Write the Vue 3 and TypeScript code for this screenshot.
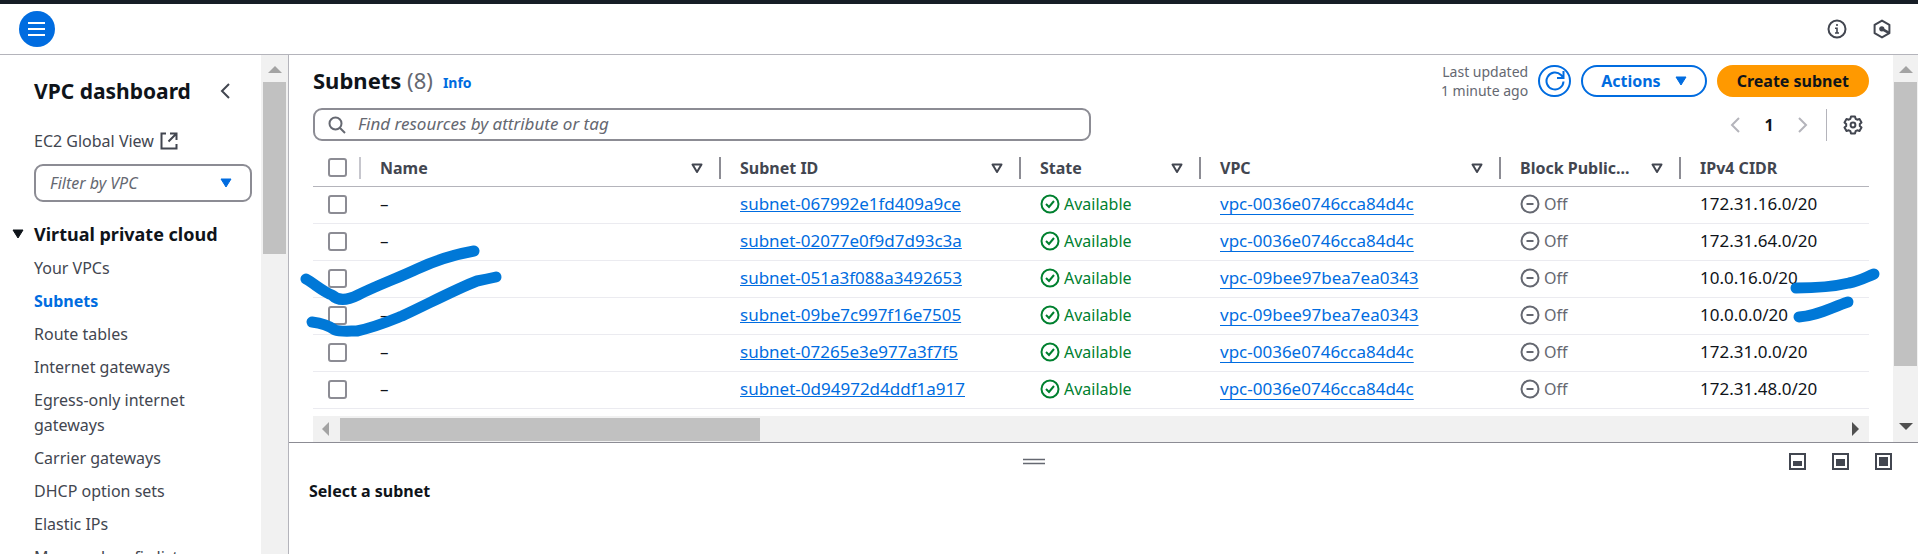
<script setup lang="ts">
import { ref } from 'vue'

interface Subnet {
  id: string
  vpc: string
  cidr: string
}

const defaultVpc = 'vpc-0036e0746cca84d4c'
const customVpc = 'vpc-09bee97bea7ea0343'

const subnets: Subnet[] = [
  { id: 'subnet-067992e1fd409a9ce', vpc: defaultVpc, cidr: '172.31.16.0/20' },
  { id: 'subnet-02077e0f9d7d93c3a', vpc: defaultVpc, cidr: '172.31.64.0/20' },
  { id: 'subnet-051a3f088a3492653', vpc: customVpc, cidr: '10.0.16.0/20' },
  { id: 'subnet-09be7c997f16e7505', vpc: customVpc, cidr: '10.0.0.0/20' },
  { id: 'subnet-07265e3e977a3f7f5', vpc: defaultVpc, cidr: '172.31.0.0/20' },
  { id: 'subnet-0d94972d4ddf1a917', vpc: defaultVpc, cidr: '172.31.48.0/20' },
]

const columns = [
  { key: 'name', label: 'Name', sortable: true },
  { key: 'id', label: 'Subnet ID', sortable: true },
  { key: 'state', label: 'State', sortable: true },
  { key: 'vpc', label: 'VPC', sortable: true },
  { key: 'block', label: 'Block Public...', sortable: true },
  { key: 'cidr', label: 'IPv4 CIDR', sortable: false },
]

const links = [
  'Your VPCs',
  'Subnets',
  'Route tables',
  'Internet gateways',
  'Egress-only internet gateways',
  'Carrier gateways',
  'DHCP option sets',
  'Elastic IPs',
  'Managed prefix lists',
]

const selected = ref<string[]>([])
const query = ref('')
</script>

<template>
  <div class="page">
    <header class="topbar">
      <button class="menu" aria-label="Open navigation">
        <svg width="18" height="16" viewBox="0 0 18 16"><path d="M0 2h17M0 8h17M0 14h17" stroke="#fff" stroke-width="2" /></svg>
      </button>
      <div class="tools">
        <button class="icon" aria-label="Info">
          <svg width="20" height="20" viewBox="0 0 20 20" fill="none" stroke="#424650" stroke-width="2"><circle cx="10" cy="10" r="8.5" /><path d="M10 5v2M8 9.3h2V14M8 14h4" stroke-width="1.6" /></svg>
        </button>
        <button class="icon" aria-label="Amazon Q">
          <svg width="20" height="20" viewBox="0 0 20 20" fill="none" stroke="#424650" stroke-width="2"><path d="M10 1.6l7.4 4.2v8.4L10 18.4l-7.4-4.2V5.800z" stroke-linejoin="round" /><circle cx="9.800" cy="9.800" r="2.600" fill="#424650" stroke="none" /><path d="M10 10l7 3.800" stroke-width="2.600" /></svg>
        </button>
      </div>
    </header>

    <div class="body">
      <aside class="sidebar">
        <nav class="nav">
          <div class="nav-head">
            <h2>VPC dashboard</h2>
            <button class="icon" aria-label="Close navigation">
              <svg width="10" height="16" viewBox="0 0 10 16" fill="none" stroke="#424650" stroke-width="2"><path d="M9 1L2 8l7 7" /></svg>
            </button>
          </div>
          <a class="global" href="#">EC2 Global View
            <svg width="18" height="18" viewBox="0 0 18 18" fill="none" stroke="#424650" stroke-width="2"><path d="M6 1.500H1.500v15h15V12M10 1.500h6.500V8M16 2L8.500 9.500" /></svg>
          </a>
          <div class="filter">
            <select aria-label="Filter by VPC"><option>Filter by VPC</option></select>
            <svg width="12" height="10" viewBox="0 0 12 10"><path d="M1 1h10L6 9z" fill="#006ce0" stroke="#006ce0" stroke-linejoin="round" /></svg>
          </div>
          <button class="section">
            <svg width="12" height="10" viewBox="0 0 12 10"><path d="M1 1h10L6 9z" fill="#0f141a" stroke="#0f141a" stroke-linejoin="round" /></svg>
            Virtual private cloud
          </button>
          <ul>
            <li v-for="link in links" :key="link">
              <a href="#" :class="{ active: link === 'Subnets' }">{{ link }}</a>
            </li>
          </ul>
        </nav>
        <div class="vbar nav-bar">
          <svg class="arrow" width="14" height="8" viewBox="0 0 14 8"><path d="M0 7L7 0l7 7z" fill="#a3a3a3" /></svg>
          <div class="thumb"></div>
        </div>
      </aside>

      <main class="main">
        <section class="listing">
          <div class="content">
            <div class="title-row">
              <h1>Subnets <span>(8)</span></h1>
              <a class="info" href="#">Info</a>
              <div class="actions">
                <p class="updated">Last updated<br />1 minute ago</p>
                <button class="round" aria-label="Refresh">
                  <svg width="20" height="20" viewBox="0 0 20 20" fill="none" stroke="#006ce0" stroke-width="2"><path d="M18.500 10.500A8.500 8.500 0 1 1 16 4l2 2.500M18.500 0v7H12" /></svg>
                </button>
                <button class="pill">Actions
                  <svg width="12" height="10" viewBox="0 0 12 10"><path d="M1 1h10L6 9z" fill="#006ce0" stroke="#006ce0" stroke-linejoin="round" /></svg>
                </button>
                <button class="pill primary">Create subnet</button>
              </div>
            </div>

            <div class="search-row">
              <label class="search">
                <svg width="18" height="18" viewBox="0 0 18 18" fill="none" stroke="#656871" stroke-width="2"><circle cx="7.500" cy="7.500" r="6" /><path d="M12 12l5 5" /></svg>
                <input v-model="query" type="text" aria-label="Find resources" placeholder="Find resources by attribute or tag" />
              </label>
              <div class="pager">
                <button class="icon" aria-label="Previous page">
                  <svg width="10" height="16" viewBox="0 0 10 16" fill="none" stroke="#b4b4bb" stroke-width="2"><path d="M9 1L2 8l7 7" /></svg>
                </button>
                <button class="icon current">1</button>
                <button class="icon" aria-label="Next page">
                  <svg width="10" height="16" viewBox="0 0 10 16" fill="none" stroke="#b4b4bb" stroke-width="2"><path d="M1 1l7 7-7 7" /></svg>
                </button>
                <span class="rule"></span>
                <button class="icon" aria-label="Preferences">
                  <svg width="20" height="20" viewBox="0 0 20 20" fill="none" stroke="#424650" stroke-width="2" stroke-linejoin="round"><path d="M8 1.500h4l.6 2.300 1.600.9 2.300-.7 2 3.400L16.800 9v2l1.700 1.600-2 3.400-2.300-.7-1.600.9-.6 2.300H8l-.6-2.300-1.600-.9-2.300.7-2-3.400L3.200 11V9L1.500 7.400l2-3.400 2.300.7 1.600-.9z" /><circle cx="10" cy="10" r="2.400" /></svg>
                </button>
              </div>
            </div>

            <table>
              <colgroup>
                <col class="c-check" /><col class="c-name" /><col class="c-wide" /><col class="c-slim" /><col class="c-wide" /><col class="c-slim" /><col />
              </colgroup>
              <thead>
                <tr>
                  <th class="check"><input type="checkbox" aria-label="Select all subnets" /></th>
                  <th v-for="col in columns" :key="col.key" scope="col">
                    <div class="th">
                      {{ col.label }}
                      <svg v-if="col.sortable" width="12" height="11" viewBox="0 0 12 11"><path d="M1.500 1.500h9L6 9z" fill="none" stroke="#424650" stroke-width="2" stroke-linejoin="round" /></svg>
                    </div>
                  </th>
                </tr>
              </thead>
              <tbody>
                <tr v-for="subnet in subnets" :key="subnet.id">
                  <td class="check"><input v-model="selected" type="checkbox" :value="subnet.id" :aria-label="subnet.id" /></td>
                  <td>–</td>
                  <td><a class="id" href="#">{{ subnet.id }}</a></td>
                  <td>
                    <span class="status ok">
                      <svg width="20" height="20" viewBox="0 0 20 20" fill="none" stroke="#00802f" stroke-width="2"><circle cx="10" cy="10" r="8.500" /><path d="M6 10l3 3 5-6" /></svg>Available
                    </span>
                  </td>
                  <td><a class="vpc" href="#">{{ subnet.vpc }}</a></td>
                  <td>
                    <span class="status off">
                      <svg width="20" height="20" viewBox="0 0 20 20" fill="none" stroke="#656871" stroke-width="2"><circle cx="10" cy="10" r="8.500" /><path d="M6.500 10h7" /></svg>Off
                    </span>
                  </td>
                  <td>{{ subnet.cidr }}</td>
                </tr>
              </tbody>
            </table>

            <div class="hbar">
              <svg class="left" width="8" height="14" viewBox="0 0 8 14"><path d="M7 0L0 7l7 7z" fill="#a3a3a3" /></svg>
              <div class="thumb"></div>
              <svg class="right" width="8" height="14" viewBox="0 0 8 14"><path d="M0 0l7 7-7 7z" fill="#505050" /></svg>
            </div>
          </div>

          <div class="vbar main-bar">
            <svg class="arrow" width="14" height="8" viewBox="0 0 14 8"><path d="M0 7L7 0l7 7z" fill="#a3a3a3" /></svg>
            <div class="thumb"></div>
            <svg class="arrow down" width="14" height="8" viewBox="0 0 14 8"><path d="M0 0l7 7 7-7z" fill="#505050" /></svg>
          </div>

          <svg class="ink" width="1600" height="300" viewBox="289 55 1600 300" fill="none" stroke="#0078d7" stroke-width="11" stroke-linecap="round" stroke-linejoin="round">
            <path d="M306 279C315 284 322 291 332 295C338 301 346 301 358 295C378 285 398 278 417 269C436 260 452 255 474 251" />
            <path d="M312 322C320 323 328 325 335 330C340 332 350 331 357 331C376 327 392 320 402 316C424 306 456 289 477 281Q487 279 496 277" />
            <path d="M1796 288C1815 288 1832 287 1849 283C1860 281 1866 277 1874 274" />
            <path d="M1799 317C1817 316 1830 308 1848 302" />
          </svg>
        </section>

        <section class="split">
          <div class="split-head">
            <button class="icon handle" aria-label="Resize panel">
              <svg width="22" height="8" viewBox="0 0 22 8"><path d="M0 1.500h22M0 5.500h22" stroke="#656871" stroke-width="1.500" /></svg>
            </button>
            <div class="sizes">
              <button class="icon" aria-label="Small panel">
                <svg width="17" height="17" viewBox="0 0 17 17"><path d="M1 1h15v15H1z" fill="none" stroke="#424650" stroke-width="2" /><path d="M4 8h9v5H4z" fill="#424650" /></svg>
              </button>
              <button class="icon" aria-label="Half panel">
                <svg width="17" height="17" viewBox="0 0 17 17"><path d="M1 1h15v15H1z" fill="none" stroke="#424650" stroke-width="2" /><path d="M4 6h9v7H4z" fill="#424650" /></svg>
              </button>
              <button class="icon" aria-label="Full panel">
                <svg width="17" height="17" viewBox="0 0 17 17"><path d="M1 1h15v15H1z" fill="none" stroke="#424650" stroke-width="2" /><path d="M4 4h9v9H4z" fill="#424650" /></svg>
              </button>
            </div>
          </div>
          <h3>Select a subnet</h3>
        </section>
      </main>
    </div>
  </div>
</template>

<style>
body {
  margin: 0;
  overflow: hidden;
}
</style>

<style scoped>
* {
  box-sizing: border-box;
}
.page {
  display: flex;
  flex-direction: column;
  height: 100vh;
  overflow: hidden;
  background: #fff;
  color: #0f141a;
  font: 16px/24px "Noto Sans", "Open Sans", sans-serif;
}
button,
input,
select {
  font: inherit;
  color: inherit;
}
button {
  padding: 0;
  border: 0;
  background: none;
}
svg {
  display: block;
  flex: none;
}
h1,
h2,
h3,
p,
ul {
  margin: 0;
  padding: 0;
}
a {
  text-decoration: none;
}
.icon {
  display: flex;
  align-items: center;
  justify-content: center;
}
.topbar {
  display: flex;
  flex: none;
  align-items: center;
  justify-content: space-between;
  height: 55px;
  padding: 0 26px 0 19px;
  border-top: 4px solid #161d26;
  border-bottom: 1px solid #b4b4bb;
}
.menu {
  display: flex;
  align-items: center;
  justify-content: center;
  width: 36px;
  height: 36px;
  border-radius: 50%;
  background: #006ce0;
}
.tools {
  display: flex;
  gap: 25px;
}
.body {
  display: flex;
  flex: 1;
  min-height: 0;
}
.sidebar {
  display: flex;
  flex: none;
  width: 289px;
  border-right: 1px solid #b4b4bb;
}
.nav {
  flex: 1;
  padding: 22px 9px 0 34px;
  overflow: hidden;
  color: #424650;
}
.nav-head {
  display: flex;
  align-items: center;
  justify-content: space-between;
  padding-right: 22px;
}
h2 {
  color: #0f141a;
  font-size: 21px;
  font-weight: 700;
  line-height: 28px;
}
.global {
  display: flex;
  align-items: center;
  gap: 6px;
  margin-top: 24px;
  color: #424650;
}
.filter {
  display: grid;
  align-items: center;
  margin-top: 11px;
}
.filter > * {
  grid-area: 1 / 1;
}
.filter svg {
  justify-self: end;
  margin-right: 20px;
  pointer-events: none;
}
.filter select {
  appearance: none;
  width: 100%;
  height: 38px;
  padding: 0 14px;
  border: 2px solid #8c8c94;
  border-radius: 9px;
  background: #fff;
  color: #656871;
  font-style: italic;
}
.section {
  display: flex;
  align-items: center;
  gap: 10px;
  margin: 20px 0 0 -22px;
  color: #0f141a;
  font-size: 18px;
  font-weight: 700;
  white-space: nowrap;
}
ul {
  display: flex;
  flex-direction: column;
  gap: 8px;
  margin-top: 10px;
  padding-right: 40px;
  line-height: 25px;
  list-style: none;
}
li a {
  display: block;
  color: #424650;
}
li .active {
  color: #006ce0;
  font-weight: 700;
}
.vbar {
  display: flex;
  flex: none;
  flex-direction: column;
  align-items: center;
  background: #f1f1f1;
}
.vbar .arrow {
  margin: 11px 0 8px;
}
.vbar .down {
  margin: auto 0 11px;
}
.vbar .thumb {
  width: 23px;
  background: #c1c1c1;
}
.nav-bar {
  width: 27px;
}
.nav-bar .thumb {
  height: 172px;
}
.main-bar {
  width: 25px;
}
.main-bar .thumb {
  height: 284px;
}
.main {
  display: flex;
  flex: 1;
  flex-direction: column;
  min-width: 0;
}
.listing {
  position: relative;
  display: flex;
  flex: none;
  border-bottom: 1px solid #8c8c94;
}
.content {
  flex: 1;
  min-width: 0;
  padding: 10px 24px 0;
}
.title-row {
  display: flex;
  align-items: flex-start;
  height: 32px;
}
h1 {
  font-size: 22px;
  font-weight: 700;
  line-height: 30px;
}
h1 span {
  color: #656871;
  font-weight: 400;
}
.info {
  margin: 8px 0 0 10px;
  color: #006ce0;
  font-size: 14px;
  font-weight: 700;
  line-height: 20px;
}
.actions {
  display: flex;
  align-items: center;
  height: 32px;
  margin-left: auto;
}
.updated {
  margin-right: 10px;
  color: #656871;
  font-size: 14px;
  line-height: 19px;
  text-align: right;
}
.round,
.pill {
  display: flex;
  align-items: center;
  justify-content: center;
  height: 32px;
  border: 2px solid #006ce0;
  border-radius: 17px;
  color: #006ce0;
  font-weight: 700;
}
.round {
  width: 33px;
}
.pill {
  gap: 14px;
  margin-left: 10px;
  padding: 0 18px;
}
.primary {
  padding: 0 18px;
  border-color: #ff9900;
  background: #ff9900;
  color: #0f141a;
}
.search-row {
  display: flex;
  align-items: center;
  justify-content: space-between;
  margin-top: 11px;
}
.search {
  display: flex;
  align-items: center;
  gap: 12px;
  width: 50%;
  height: 33px;
  padding: 0 13px;
  border: 2px solid #8c8c94;
  border-radius: 9px;
}
.search input {
  flex: 1;
  min-width: 0;
  height: 24px;
  padding: 0 0 2px;
  border: 0;
  outline: 0;
  background: none;
  font-size: 17px;
}
.search input::placeholder {
  color: #656871;
  font-style: italic;
  opacity: 1;
}
.pager {
  display: flex;
  align-items: center;
  padding-right: 6px;
}
.current {
  width: 58px;
  font-weight: 700;
}
.rule {
  width: 1px;
  height: 32px;
  margin: 0 16px 0 18px;
  background: #b4b4bb;
}
table {
  width: 100%;
  margin-top: 5px;
  border-collapse: separate;
  border-spacing: 0;
  table-layout: fixed;
}
.c-check {
  width: 48px;
}
.c-name {
  width: 360px;
}
.c-wide {
  width: 300px;
}
.c-slim {
  width: 180px;
}
th {
  height: 41px;
  padding: 4px 0 0;
  border-bottom: 1px solid #b4b4bb;
  color: #424650;
  font-weight: 700;
  text-align: left;
}
.th {
  display: flex;
  align-items: center;
  justify-content: space-between;
  height: 22px;
  padding: 0 16px 0 19px;
  border-right: 2px solid #8c8c94;
  white-space: nowrap;
}
th:last-child .th {
  border-right: 0;
}
td {
  height: 37px;
  padding: 0 0 2px 19px;
  border-bottom: 1px solid #ebebf0;
  font-size: 17px;
  white-space: nowrap;
}
tr td.check {
  padding: 0 0 2px 15px;
}
tr th.check {
  padding: 3px 0 0 15px;
  background: linear-gradient(#c6c6cd, #c6c6cd) right 11px / 2px 22px no-repeat;
}
input[type="checkbox"] {
  display: block;
  appearance: none;
  width: 19px;
  height: 19px;
  margin: 0;
  border: 2px solid #8c8c94;
  border-radius: 3px;
  background: #fff;
}
td a {
  color: #006ce0;
  text-decoration: underline 1px;
  text-decoration-skip-ink: none;
}
.id {
  text-underline-offset: 1px;
}
.vpc {
  text-underline-offset: 4px;
}
.status {
  display: flex;
  align-items: center;
  gap: 4px;
  font-size: 16px;
}
.ok {
  color: #00802f;
}
.off {
  color: #656871;
}
.hbar {
  display: flex;
  align-items: center;
  height: 26px;
  margin-top: 7px;
  background: #f1f1f1;
}
.hbar .left {
  margin: 0 10px 0 9px;
}
.hbar .right {
  margin: 0 9px 0 auto;
}
.hbar .thumb {
  width: 27%;
  height: 23px;
  background: #c1c1c1;
}
.ink {
  position: absolute;
  top: 0;
  left: 0;
  pointer-events: none;
}
.split {
  flex: 1;
  padding: 10px 26px 0 20px;
}
.split-head {
  display: flex;
  align-items: center;
}
.handle {
  margin: 0 auto;
}
.sizes {
  display: flex;
  gap: 26px;
  margin-left: 30px;
}
h3 {
  margin-top: 9px;
  font-size: 16px;
  font-weight: 700;
  line-height: 24px;
}
</style>
